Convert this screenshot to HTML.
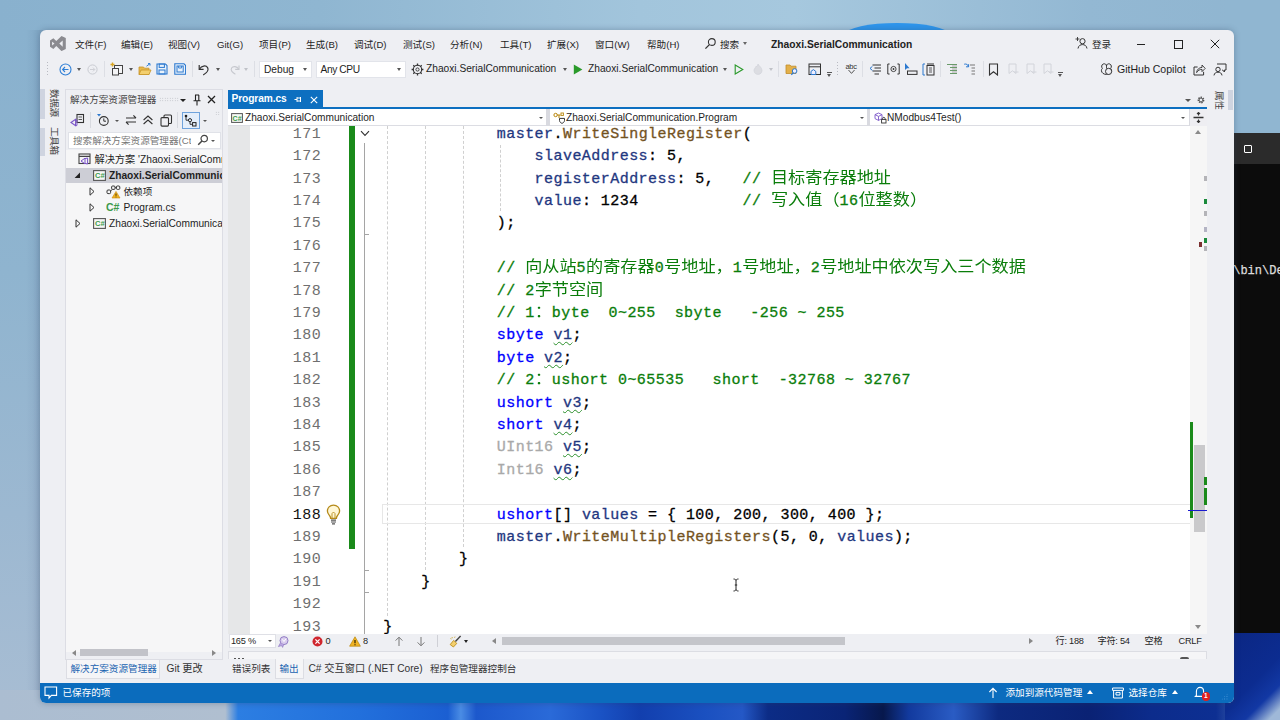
<!DOCTYPE html>
<html lang="zh-CN">
<head>
<meta charset="utf-8">
<title>Zhaoxi.SerialCommunication - Program.cs</title>
<style>
*{box-sizing:border-box;margin:0;padding:0}
html,body{width:1280px;height:720px;overflow:hidden}
body{position:relative;font-family:"Liberation Sans","Noto Sans CJK SC",sans-serif;font-size:10px;color:#1e1e1e;
 background:#8db3cf;}
.abs{position:absolute}
/* desktop */
#desk-top{left:0;top:0;width:1280px;height:40px;background:linear-gradient(90deg,#89b1ce 0%,#8fb6d1 25%,#a2c5dc 50%,#a6c8de 62%,#93b8d3 85%,#8fb5d0 100%)}
#desk-left{left:0;top:30px;width:60px;height:690px;background:linear-gradient(90deg,rgba(30,50,90,0) 26px,rgba(30,50,90,.09) 40px),linear-gradient(180deg,#89b1ce 0%,#8fb4cf 35%,#9cb8d1 70%,#a8bdd3 100%)}
#desk-right{left:1225px;top:0;width:55px;height:140px;background:#90b6d1}
#desk-bottom{left:0;top:690px;width:1280px;height:30px;background:linear-gradient(90deg,#abbdd1 0%,#b0bfd0 17.6%,#2c7ee2 18.6%,#2270dc 28%,#1b5fd2 35%,#4a8ce4 36%,#1c58cc 37.2%,#2a6ad8 43%,#1a52c4 47%,#123fae 50%,#1a50c0 55%,#2458c6 58%,#0c2c86 60%,#0a2476 66%,#07184c 69%,#123a9e 71%,#2a5cc4 74.5%,#0d2a80 78%,#0a2274 85%,#0c2c8c 90%,#0d2f92 95%,#4a6cb4 97.5%,#9fb4d4 100%)}
#term{left:1225px;top:133px;width:55px;height:500px;background:#0c0c0c}
#term-title{left:0;top:0;width:55px;height:31px;background:#2b2b2b}
#term-max{left:19px;top:12px;width:8px;height:8px;border:1px solid #fff;border-radius:1px}
#term-text{left:8.2px;top:131px;font-family:"Liberation Mono",monospace;font-size:12px;color:#dcdcdc;white-space:pre;-webkit-text-stroke:0.25px #dcdcdc}
#desk-rb{left:1225px;top:633px;width:55px;height:87px;background:linear-gradient(135deg,#0b2682 0%,#0c2c90 55%,#1238a4 75%,#9fb8d8 92%)}
/* window */
#win{left:40px;top:30px;width:1194px;height:672.5px;background:#eeeff3;border-radius:6px;overflow:hidden;box-shadow:0 0 6px rgba(40,60,90,.35)}
#status{left:0;top:652.5px;width:100%;height:20px;background:#0b6cbd;color:#fff}
#title{left:0;top:0;width:100%;height:27px}
.mi{top:8px;font-size:9.6px;line-height:14px;white-space:nowrap;color:#1e1e1e}
#wtitle{top:8px;font-size:10.25px;line-height:14px;font-weight:bold;color:#222;white-space:nowrap}
#toolbar{left:0;top:0;width:100%;height:60px}
.tt{font-size:10.2px;line-height:14px;white-space:nowrap;color:#1e1e1e}
.combo{top:32px;height:15px;background:#fff;border:1px solid #e2e4ea;box-sizing:content-box;margin:-1px 0 0 -1px}
.combo .tt{top:0.5px !important}
.grip{width:3px;height:16px;background-image:radial-gradient(circle,#b9bbc2 0.6px,transparent 0.8px);background-size:3px 3px}
.lbar{width:4.5px;background:#cfd4e0}
.vtab{writing-mode:vertical-rl;text-orientation:sideways;font-size:9.6px;line-height:14px;width:14px;color:#444;white-space:nowrap;letter-spacing:-0.3px}
#solexp{left:26px;top:60px;width:156px;height:569px;border:0;background:#eeeff3;overflow:hidden;outline:1px solid #dcdde4}
.se-title{font-size:9.6px;line-height:14px;color:#444;white-space:nowrap}
.hgrip{height:5px;background-image:radial-gradient(circle,#b5b7be 0.6px,transparent 0.8px);background-size:2.5px 2.5px}
#se-search{background:#fff;border:1px solid #e0e2e8}
#se-tree{background:#f6f6f7;overflow:hidden}
.tr{margin-top:1px;font-size:10.2px;line-height:14px;white-space:nowrap;color:#1e1e1e}
#editor{left:188px;top:60px;width:979px;height:558px}
#tab{left:0;top:0;width:95px;height:18px;background:#0d6fc0}
#tabname{left:3.5px;top:2px;font-size:10.2px;font-weight:bold;color:#fff;line-height:14px;letter-spacing:-0.1px}
#tabline{left:0;top:17px;width:979px;height:2px;background:#0d6fc0}
#nav{left:0;top:19px;width:979px;height:16.5px;background:#fff;border-bottom:1px solid #dcdde3}
.nv{top:1.5px;font-size:10.15px;line-height:14px;white-space:nowrap;color:#1e1e1e}
#code{background:#fff;overflow:hidden;font-family:"Liberation Mono","Noto Sans CJK SC",monospace;font-size:15px;letter-spacing:0.452px}
.ln{margin-top:1.5px;left:30.7px;width:62.5px;text-align:right;line-height:22.4px;height:22.4px;color:#6f6f6f;white-space:pre}
.ln.cur{color:#111}
.cl{margin-top:1.5px;margin-left:0.8px;-webkit-text-stroke:0.3px currentColor;line-height:22.4px;height:22.4px;white-space:pre;color:#000}
.cl .k{color:#0000ff}.cl .c{color:#0a7d0a}.cl .v{color:#1f377f}.cl .m{color:#74531f}.cl .f{color:#a9a9a9}
.cl .s{color:#1f377f;text-decoration:underline wavy #2a8f2a 1.3px;text-underline-offset:2.2px}
.cl .j{letter-spacing:0;-webkit-text-stroke:0;color:#0a7d0a;font-family:"Noto Sans CJK SC",sans-serif;font-size:17.15px;line-height:12px;display:inline-block;transform:scaleY(.92);vertical-align:baseline;position:relative;top:1px}
.ig{width:0;border-left:1px dashed #d0d0d0}
#vsb{background:#f6f6f6}
#ebar{background:#eeeff3}
.bt{top:0.5px;font-size:9.2px;letter-spacing:-0.25px;line-height:14px;white-space:nowrap;color:#1e1e1e}
.st{top:3px;font-size:9.6px;line-height:14px;color:#fff;white-space:nowrap}
</style>
</head>
<body>
<div id="desk-top" class="abs"></div>
<div id="desk-left" class="abs"></div>
<div class="abs" style="left:846px;top:22.5px;width:102px;height:22px;border-radius:50%;background:#2f96ec;filter:blur(0.6px)"></div>
<div id="desk-right" class="abs"></div>
<div id="desk-bottom" class="abs"></div>
<div id="desk-rb" class="abs"></div>
<div id="term" class="abs"><div id="term-title" class="abs"><div id="term-max" class="abs"></div></div><div id="term-text" class="abs">\bin\De</div></div>

<div id="win" class="abs">
<div id="title" class="abs">
<svg class="abs" style="left:9.5px;top:5.5px" width="16" height="15.2" viewBox="0 0 16 15"><path d="M11.5 0 L15.8 2 V13 L11.5 15 L6.3 10 L3.4 12.8 L0 10.6 V4.4 L3.4 2.2 L6.3 5 Z M12.7 4.4 L9.3 7.5 L12.7 10.6 Z M2.1 5.6 V9.4 L4.5 7.5 Z" fill="#8b8b90" fill-rule="evenodd"/></svg>
<span class="abs mi" style="left:35px">文件(F)</span>
<span class="abs mi" style="left:81px">编辑(E)</span>
<span class="abs mi" style="left:128px">视图(V)</span>
<span class="abs mi" style="left:177px">Git(G)</span>
<span class="abs mi" style="left:219px">项目(P)</span>
<span class="abs mi" style="left:266px">生成(B)</span>
<span class="abs mi" style="left:314px">调试(D)</span>
<span class="abs mi" style="left:363px">测试(S)</span>
<span class="abs mi" style="left:410px">分析(N)</span>
<span class="abs mi" style="left:460px">工具(T)</span>
<span class="abs mi" style="left:507px">扩展(X)</span>
<span class="abs mi" style="left:555px">窗口(W)</span>
<span class="abs mi" style="left:607px">帮助(H)</span>
<svg class="abs" style="left:664px;top:7px" width="13" height="13" viewBox="0 0 13 13"><circle cx="7.8" cy="5" r="3.4" fill="none" stroke="#333" stroke-width="1.1"/><path d="M5.4 7.6 L1.4 11.6" stroke="#333" stroke-width="1.3"/></svg>
<span class="abs mi" style="left:680px">搜索</span><span class="abs" style="left:703px;top:12px;width:0;height:0;border:2.5px solid transparent;border-top:3px solid #666"></span>
<span class="abs" id="wtitle" style="left:731px">Zhaoxi.SerialCommunication</span>
<svg class="abs" style="left:1035px;top:6px" width="14" height="14" viewBox="0 0 14 14"><circle cx="7.5" cy="5.2" r="2.6" fill="none" stroke="#333" stroke-width="1"/><path d="M3 12.5 C3.5 9.5 5.5 8.6 7.5 8.6 S11.5 9.5 12 12.5" fill="none" stroke="#333" stroke-width="1"/><path d="M2.5 1 V5 M0.5 3 H4.5" stroke="#333" stroke-width="0.9"/></svg>
<span class="abs mi" style="left:1052px">登录</span>
<span class="abs" style="left:1097px;top:14px;width:8px;height:1px;background:#222"></span>
<span class="abs" style="left:1134px;top:10px;width:8.5px;height:8.5px;border:1px solid #222"></span>
<svg class="abs" style="left:1170px;top:9px" width="10" height="10" viewBox="0 0 10 10"><path d="M0.8 0.8 L9.2 9.2 M9.2 0.8 L0.8 9.2" stroke="#222" stroke-width="1"/></svg>
</div>

<div id="toolbar" class="abs">
<span class="abs grip" style="left:6px;top:31px"></span>
<svg class="abs" style="left:19px;top:32.5px" width="13" height="13" viewBox="0 0 13 13"><circle cx="6.5" cy="6.5" r="5.5" fill="none" stroke="#2f7fd6" stroke-width="1.1"/><path d="M9.5 6.5 H3.8 M6 4 L3.6 6.5 L6 9" fill="none" stroke="#2f7fd6" stroke-width="1.1"/></svg>
<span class="abs" style="left:36.5px;top:38px;width:0;height:0;border:2.5px solid transparent;border-top:3px solid #555"></span>
<svg class="abs" style="left:46.5px;top:33.5px" width="11" height="11" viewBox="0 0 11 11"><circle cx="5.5" cy="5.5" r="4.6" fill="none" stroke="#c9cbd1" stroke-width="1"/><path d="M3 5.5 H7.6 M6 3.6 L7.8 5.5 L6 7.4" fill="none" stroke="#c9cbd1" stroke-width="0.9"/></svg>
<span class="abs" style="left:64px;top:31px;width:1px;height:16px;background:#dcdee4"></span>
<svg class="abs" style="left:70px;top:32px" width="14" height="14" viewBox="0 0 14 14"><rect x="4.5" y="3.5" width="8" height="8" fill="#f4f4f6" stroke="#444" stroke-width="1"/><rect x="2.5" y="6.5" width="6" height="6.5" fill="#f4f4f6" stroke="#444" stroke-width="1"/><path d="M2.5 0.5 V4.5 M0.5 2.5 H4.5" stroke="#d9a520" stroke-width="1.4"/></svg>
<span class="abs" style="left:88.5px;top:38px;width:0;height:0;border:2.5px solid transparent;border-top:3px solid #555"></span>
<svg class="abs" style="left:98px;top:32.5px" width="14" height="13" viewBox="0 0 14 13"><path d="M1 4 H5.5 L6.5 5.2 H11 V11.5 H1 Z" fill="#e8b84a" stroke="#c8952a" stroke-width="0.8"/><path d="M1 11.5 L3 7 H13 L11 11.5 Z" fill="#f3cf6e" stroke="#c8952a" stroke-width="0.8"/><path d="M8.5 3.2 L11.8 0.8 M10 0.6 H12 V2.6" fill="none" stroke="#2f7fd6" stroke-width="1"/></svg>
<svg class="abs" style="left:116px;top:33px" width="12" height="12" viewBox="0 0 12 12"><path d="M1 1 H9.5 L11 2.5 V11 H1 Z" fill="#eaf2fb" stroke="#2b78cf" stroke-width="1.1"/><rect x="3.2" y="1" width="5.2" height="3.4" fill="none" stroke="#2b78cf" stroke-width="1"/><rect x="3" y="7" width="6" height="4" fill="none" stroke="#2b78cf" stroke-width="1"/></svg>
<svg class="abs" style="left:133.5px;top:33px" width="12.5" height="12" viewBox="0 0 12.5 12"><path d="M0.8 0.8 H10 L11.6 2.4 V11.2 H0.8 Z" fill="#eaf2fb" stroke="#2b78cf" stroke-width="1.1"/><rect x="3" y="3" width="6.2" height="6" fill="none" stroke="#2b78cf" stroke-width="1"/><path d="M4.6 3 V5 H7.6 V3" fill="none" stroke="#2b78cf" stroke-width="0.9"/></svg>
<span class="abs" style="left:152px;top:31px;width:1px;height:16px;background:#dcdee4"></span>
<svg class="abs" style="left:157px;top:32.5px" width="14" height="13" viewBox="0 0 14 13"><path d="M2.2 2 V6.4 H6.6" fill="none" stroke="#333" stroke-width="1.2"/><path d="M2.6 6 C4.5 2.6 9 2 10.6 4.6 C12.2 7.4 9.6 10 6.2 12" fill="none" stroke="#333" stroke-width="1.2"/></svg>
<span class="abs" style="left:175.5px;top:38px;width:0;height:0;border:2.5px solid transparent;border-top:3px solid #555"></span>
<svg class="abs" style="left:189px;top:33.5px" width="12" height="11" viewBox="0 0 12 11"><path d="M10 1.6 V5.4 H6.2" fill="none" stroke="#c6c8ce" stroke-width="1.1"/><path d="M9.6 5 C8 2.2 4 1.8 2.6 4 C1.2 6.4 3.4 8.6 6.4 10.2" fill="none" stroke="#c6c8ce" stroke-width="1.1"/></svg>
<span class="abs" style="left:203.5px;top:38px;width:0;height:0;border:2.5px solid transparent;border-top:3px solid #c0c2c8"></span>
<span class="abs" style="left:214px;top:31px;width:1px;height:16px;background:#dcdee4"></span>
<span class="abs combo" style="left:220px;width:51px"><span class="abs tt" style="left:4px;top:2px">Debug</span></span>
<span class="abs" style="left:262.5px;top:38px;width:0;height:0;border:2.5px solid transparent;border-top:3px solid #555"></span>
<span class="abs combo" style="left:276.5px;width:88px"><span class="abs tt" style="left:4px;top:2px;letter-spacing:-0.4px">Any CPU</span></span>
<span class="abs" style="left:356.5px;top:38px;width:0;height:0;border:2.5px solid transparent;border-top:3px solid #555"></span>
<svg class="abs" style="left:370.5px;top:32.5px" width="13" height="13" viewBox="0 0 13 13"><circle cx="6.5" cy="6.5" r="4.2" fill="none" stroke="#333" stroke-width="1.1"/><circle cx="6.5" cy="6.5" r="1.6" fill="none" stroke="#333" stroke-width="0.9"/><path d="M6.5 0.6 V2.6 M6.5 10.4 V12.4 M0.6 6.5 H2.6 M10.4 6.5 H12.4 M2.3 2.3 L3.7 3.7 M9.3 9.3 L10.7 10.7 M2.3 10.7 L3.7 9.3 M9.3 3.7 L10.7 2.3" stroke="#333" stroke-width="1.3"/></svg>
<span class="abs tt" style="left:386px;top:32px">Zhaoxi.SerialCommunication</span>
<span class="abs" style="left:522.5px;top:38px;width:0;height:0;border:2.5px solid transparent;border-top:3px solid #555"></span>
<svg class="abs" style="left:532.5px;top:33.5px" width="10" height="11" viewBox="0 0 10 11"><path d="M0.8 0.6 L9.4 5.5 L0.8 10.4 Z" fill="#2a9a2a"/></svg>
<span class="abs tt" style="left:548px;top:32px">Zhaoxi.SerialCommunication</span>
<span class="abs" style="left:682.5px;top:38px;width:0;height:0;border:2.5px solid transparent;border-top:3px solid #555"></span>
<svg class="abs" style="left:694px;top:33.5px" width="10" height="11" viewBox="0 0 10 11"><path d="M1.2 1 L8.8 5.5 L1.2 10 Z" fill="none" stroke="#2a9a2a" stroke-width="1.1"/></svg>
<svg class="abs" style="left:712px;top:33px" width="12" height="12" viewBox="0 0 12 12"><path d="M6 1 C7 3 10 4.5 10 7.5 C10 10 8 11.4 6 11.4 C4 11.4 2 10 2 7.6 C2 5.6 3.6 4.8 4 3.2 C5 4 5.6 3 6 1 Z" fill="#dcdde2" stroke="#cfd0d6" stroke-width="0.6"/></svg>
<span class="abs" style="left:728.5px;top:38px;width:0;height:0;border:2.5px solid transparent;border-top:3px solid #c0c2c8"></span>
<span class="abs" style="left:738px;top:31px;width:1px;height:16px;background:#dcdee4"></span>
<svg class="abs" style="left:745px;top:32.5px" width="14" height="13" viewBox="0 0 14 13"><path d="M1 2 H5 L6 3.2 H11 V10.5 H1 Z" fill="#e3b04a" stroke="#c08d2a" stroke-width="0.8"/><circle cx="9.6" cy="8" r="2.3" fill="#eef" stroke="#2b78cf" stroke-width="1"/><path d="M8 9.8 L6.4 11.8" stroke="#2b78cf" stroke-width="1.2"/></svg>
<svg class="abs" style="left:768px;top:32.5px" width="14" height="13" viewBox="0 0 14 13"><rect x="1" y="1" width="11.5" height="10.5" fill="none" stroke="#333" stroke-width="1"/><path d="M1 3.8 H12.5" stroke="#333" stroke-width="1"/><path d="M3 11.5 V8.4 L5.4 6.6 L7.8 8.4 V11.5 Z" fill="#eef" stroke="#2b78cf" stroke-width="1"/></svg>
<span class="abs" style="left:786.5px;top:42px;width:5px;height:1px;background:#555"></span><span class="abs" style="left:786.5px;top:44px;width:0;height:0;border:2.5px solid transparent;border-top:3px solid #555"></span>
<span class="abs grip" style="left:796px;top:31px"></span>
<span class="abs" style="left:805.5px;top:31.5px;font-size:7.5px;line-height:9px;color:#333;letter-spacing:-0.3px">abc</span>
<svg class="abs" style="left:807px;top:39px" width="9" height="6" viewBox="0 0 9 6"><path d="M1.5 1 L4.5 4.4 L7.5 1" fill="none" stroke="#555" stroke-width="1"/></svg>
<span class="abs" style="left:822px;top:31px;width:1px;height:16px;background:#dcdee4"></span>
<svg class="abs" style="left:829px;top:33px" width="13" height="12" viewBox="0 0 13 12"><path d="M3.5 2 H12 M5.5 5 H12 M3.5 8 H12 M5.5 11 H10" stroke="#333" stroke-width="1"/><path d="M3.4 3.4 L1 5.4 L3.4 7.4" fill="none" stroke="#2b78cf" stroke-width="1"/></svg>
<svg class="abs" style="left:846.5px;top:33px" width="13" height="12" viewBox="0 0 13 12"><path d="M2.6 1 H0.8 V11 H2.6 M10.4 1 H12.2 V11 H10.4" fill="none" stroke="#333" stroke-width="1"/><circle cx="6.5" cy="6" r="2.6" fill="none" stroke="#333" stroke-width="0.9"/><circle cx="6.5" cy="6" r="0.9" fill="#333"/></svg>
<svg class="abs" style="left:864px;top:32px" width="14" height="13" viewBox="0 0 14 13"><path d="M1 1 L1 8 L3 6.2 L5.6 6.2 Z" fill="#2b78cf"/><rect x="3.5" y="9" width="9.5" height="3.4" fill="none" stroke="#333" stroke-width="1"/></svg>
<svg class="abs" style="left:882px;top:32.5px" width="13" height="13" viewBox="0 0 13 13"><path d="M3 1 H1 V12 H3" fill="none" stroke="#2b78cf" stroke-width="1"/><rect x="5" y="2.5" width="7" height="9.5" fill="none" stroke="#333" stroke-width="1"/><path d="M5 1 H12" stroke="#333" stroke-width="1"/><path d="M7 5 H10 M7 7 H10 M7 9 H10" stroke="#333" stroke-width="0.8"/></svg>
<span class="abs" style="left:900px;top:31px;width:1px;height:16px;background:#dcdee4"></span>
<svg class="abs" style="left:906px;top:33px" width="13" height="12" viewBox="0 0 13 12"><path d="M1 1.5 H11 M4 4.5 H11 M4 7.5 H11 M4 10.5 H11" stroke="#6a9a6a" stroke-width="1.2"/><path d="M6 3 H11 M6 6 H11 M6 9 H11" stroke="#999" stroke-width="0.8"/></svg>
<svg class="abs" style="left:922.5px;top:32.5px" width="14" height="13" viewBox="0 0 14 13"><path d="M1.2 1.2 C3.4 0.6 5 1.6 5.4 3.6 M5.6 1.2 V3.8 H3" fill="none" stroke="#2b78cf" stroke-width="1"/><path d="M7 2 H12 M8.5 5 H12 M8.5 8 H12 M8.5 11 H12" stroke="#777" stroke-width="1.2"/></svg>
<span class="abs" style="left:943px;top:31px;width:1px;height:16px;background:#dcdee4"></span>
<svg class="abs" style="left:948px;top:32.5px" width="11" height="13" viewBox="0 0 11 13"><path d="M1.5 1 H9.5 V12 L5.5 8.8 L1.5 12 Z" fill="none" stroke="#333" stroke-width="1.1"/></svg>
<svg class="abs" style="left:966.5px;top:33px" width="12" height="12" viewBox="0 0 12 12"><path d="M2 1 H9 V10.5 L5.5 7.8 L2 10.5 Z" fill="none" stroke="#d2d4da" stroke-width="1"/><path d="M7 9 H11.5" stroke="#d2d4da" stroke-width="1"/></svg>
<svg class="abs" style="left:984.5px;top:33px" width="12" height="12" viewBox="0 0 12 12"><path d="M2 1 H9 V10.5 L5.5 7.8 L2 10.5 Z" fill="none" stroke="#d2d4da" stroke-width="1"/><path d="M7 9 H11.5" stroke="#d2d4da" stroke-width="1"/></svg>
<svg class="abs" style="left:1001.5px;top:33px" width="12" height="12" viewBox="0 0 12 12"><path d="M2 1 H9 V10.5 L5.5 7.8 L2 10.5 Z" fill="none" stroke="#d2d4da" stroke-width="1"/><path d="M7 9 H11.5" stroke="#d2d4da" stroke-width="1"/></svg>
<span class="abs" style="left:1017.5px;top:42px;width:5px;height:1px;background:#555"></span><span class="abs" style="left:1017.5px;top:44px;width:0;height:0;border:2.5px solid transparent;border-top:3px solid #555"></span>
<svg class="abs" style="left:1059.5px;top:32.5px" width="13" height="13" viewBox="0 0 13 13"><path d="M3.2 1 C5 0.4 6.4 1.2 6.5 3 C6.6 1.2 8 0.4 9.8 1 C11.6 1.8 11.8 4 10.6 5.4 C12 6.4 12 9 10 10.4 C8 11.8 5 11.8 3 10.4 C1 9 1 6.4 2.4 5.4 C1.2 4 1.4 1.8 3.2 1 Z" fill="none" stroke="#333" stroke-width="1"/><circle cx="8.6" cy="8.4" r="3.1" fill="#eeeef2" stroke="#333" stroke-width="1"/><path d="M6.5 3 V5.6" stroke="#333" stroke-width="0.9"/></svg>
<span class="abs tt" style="left:1077px;top:32px;font-size:10.55px">GitHub Copilot</span>
<svg class="abs" style="left:1152.5px;top:32.5px" width="13" height="13" viewBox="0 0 13 13"><path d="M4.6 4 H1 V12 H10.6 V8.8" fill="none" stroke="#333" stroke-width="1"/><path d="M3.6 9.6 C4 6.4 6 4.6 9 4.4 V2 L12.2 5.4 L9 8.6 V6.4 C6.6 6.4 5 7.4 3.6 9.6 Z" fill="none" stroke="#333" stroke-width="0.9"/></svg>
<svg class="abs" style="left:1173px;top:32.5px" width="14" height="13" viewBox="0 0 14 13"><path d="M4 1 H13 V7 H11.4 V9 L9.6 7 H9" fill="none" stroke="#333" stroke-width="1"/><circle cx="5" cy="6.4" r="2.2" fill="#eeeef2" stroke="#333" stroke-width="1"/><path d="M1 12.4 C1.4 10 3 9.2 5 9.2 S8.6 10 9 12.4" fill="none" stroke="#333" stroke-width="1"/></svg>
</div>

<div id="lefttabs">
<span class="abs lbar" style="left:0;top:58.5px;height:30px"></span><span class="abs lbar" style="left:0;top:98px;height:27.5px"></span>
<span class="abs vtab" style="left:7px;top:59px">数据源</span>
<span class="abs vtab" style="left:7px;top:97px">工具箱</span>
</div>

<div id="solexp" class="abs">
<span class="abs se-title" style="left:4px;top:2.5px">解决方案资源管理器</span>
<span class="abs hgrip" style="left:92.5px;top:7px;width:20px"></span>
<span class="abs" style="left:113.8px;top:8.5px;width:0;height:0;border:3.2px solid transparent;border-top:3.7px solid #222"></span>
<svg class="abs" style="left:126px;top:3.5px" width="10" height="13" viewBox="0 0 10 13"><path d="M3 1 H7 M3.5 1 V6.5 M6.8 1 V6.5 M1.5 6.8 H8.5 M5 7 V11.5" fill="none" stroke="#222" stroke-width="1.1"/></svg>
<svg class="abs" style="left:140.5px;top:5px" width="9" height="9" viewBox="0 0 9 9"><path d="M1 1 L8 8 M8 1 L1 8" stroke="#222" stroke-width="1.3"/></svg>
<svg class="abs" style="left:4px;top:23px" width="15" height="14" viewBox="0 0 15 14"><rect x="7" y="1.5" width="6.5" height="8" fill="none" stroke="#333" stroke-width="1.1"/><path d="M8.5 4 H12 M8.5 6.5 H12" stroke="#333" stroke-width="0.8"/><path d="M1 9.5 L5.6 6.4 V12.8 Z" fill="none" stroke="#7a55c8" stroke-width="1.1"/><path d="M5.6 7 L7 7 V12.4 L5.6 12.4" fill="none" stroke="#7a55c8" stroke-width="0.9"/></svg>
<span class="abs" style="left:24px;top:22px;width:1px;height:16px;background:#d8dae0"></span>
<svg class="abs" style="left:30px;top:22.5px" width="14" height="14" viewBox="0 0 14 14"><path d="M1 1 H5 L3 3.6 Z" fill="#2b78cf"/><circle cx="7.8" cy="8" r="4.4" fill="none" stroke="#333" stroke-width="1.1"/><path d="M7.8 5.4 V8.2 H10" fill="none" stroke="#333" stroke-width="1"/></svg>
<span class="abs" style="left:48.7px;top:29.5px;width:0;height:0;border:2.3px solid transparent;border-top:2.8px solid #555"></span>
<svg class="abs" style="left:59px;top:24px" width="12" height="12" viewBox="0 0 12 12"><path d="M1 4 H11 M8.4 1.4 L11 4 M11 8 H1 M3.6 10.6 L1 8" fill="none" stroke="#333" stroke-width="1.1"/></svg>
<svg class="abs" style="left:76px;top:24px" width="12" height="12" viewBox="0 0 12 12"><path d="M1.6 6 L6 2 L10.4 6 M1.6 10 L6 6 L10.4 10" fill="none" stroke="#333" stroke-width="1.1"/></svg>
<svg class="abs" style="left:93.5px;top:23.5px" width="13" height="13" viewBox="0 0 13 13"><rect x="4" y="1" width="7.5" height="8.5" rx="1" fill="none" stroke="#333" stroke-width="1.1"/><rect x="1" y="3.6" width="7.5" height="8.5" rx="1" fill="#eeeef2" stroke="#333" stroke-width="1.1"/></svg>
<span class="abs" style="left:111px;top:22px;width:1px;height:16px;background:#d8dae0"></span>
<span class="abs" style="left:115.5px;top:21.5px;width:18px;height:17.5px;border:1px solid #6fa3dc;background:#e4eefa"></span>
<svg class="abs" style="left:118px;top:24px" width="13" height="13" viewBox="0 0 13 13"><circle cx="2" cy="2" r="1.3" fill="#222"/><circle cx="6" cy="6.2" r="1.6" fill="none" stroke="#222" stroke-width="1"/><rect x="8.6" y="8.6" width="3.4" height="3.4" fill="none" stroke="#222" stroke-width="1"/><path d="M2 3 V6.2 H4.4 M6 7.8 V10.3 H8.6" fill="none" stroke="#222" stroke-width="0.9"/></svg>
<span class="abs" style="left:136.7px;top:29.5px;width:0;height:0;border:2.3px solid transparent;border-top:2.8px solid #555"></span>
<span class="abs" style="left:148.5px;top:21px;width:5px;height:4px;background-image:radial-gradient(circle,#b5b7be 0.6px,transparent 0.8px);background-size:2.5px 2.5px"></span>
<div class="abs" id="se-search" style="left:2px;top:42px;width:152.5px;height:17px"><span class="abs" style="left:4px;top:1px;width:117.5px;overflow:hidden;white-space:nowrap;color:#767676;font-size:9.6px;line-height:14px">搜索解决方案资源管理器(Ctrl+;)</span></div>
<svg class="abs" style="left:131px;top:44px" width="12" height="12" viewBox="0 0 12 12"><circle cx="7.2" cy="4.6" r="3.2" fill="none" stroke="#444" stroke-width="1.2"/><path d="M5 7 L1.2 10.8" stroke="#444" stroke-width="1.5"/></svg>
<span class="abs" style="left:145.2px;top:49.5px;width:0;height:0;border:2.3px solid transparent;border-top:2.8px solid #555"></span>
<div class="abs" id="se-tree" style="left:0;top:60px;width:156px;height:502px">
<span class="abs" style="left:0;top:17.5px;width:156px;height:15px;background:#cdced6"></span>
<svg class="abs" style="left:12px;top:3px" width="13" height="12" viewBox="0 0 13 12"><rect x="1" y="1" width="11" height="9.5" fill="none" stroke="#444" stroke-width="1.1"/><path d="M1 3.4 H12" stroke="#444" stroke-width="1.1"/><path d="M3 8 L7 5.2 V10.8 Z M7 5.6 L9.6 5 V11 L7 10.4" fill="#f5f5f7" stroke="#7a55c8" stroke-width="1"/></svg>
<span class="abs tr" style="left:28.5px;top:2px">解决方案 'Zhaoxi.SerialCommunication' (2 个项目)</span>
<svg class="abs" style="left:8px;top:21.5px" width="7" height="7" viewBox="0 0 7 7"><path d="M6 0.6 V6 H0.6 Z" fill="#222"/></svg>
<svg class="abs" style="left:26.5px;top:19.5px" width="13" height="11" viewBox="0 0 13 11"><rect x="0.6" y="0.6" width="11.8" height="9.8" fill="#f7f7f7" stroke="#555" stroke-width="1.1"/><text x="2" y="8.2" font-family="Liberation Sans, sans-serif" font-size="7.5" font-weight="bold" fill="#3c9a4a">C#</text></svg>
<span class="abs tr" style="left:43px;top:18px;font-weight:bold">Zhaoxi.SerialCommunication</span>
<svg class="abs" style="left:22.5px;top:36.5px" width="6" height="9" viewBox="0 0 6 9"><path d="M1 0.8 L5 4.5 L1 8.2 Z" fill="none" stroke="#333" stroke-width="1"/></svg>
<svg class="abs" style="left:39.5px;top:34.5px" width="15" height="14" viewBox="0 0 15 14"><rect x="1" y="5" width="3.6" height="3.6" rx="1" fill="none" stroke="#333" stroke-width="1"/><rect x="5.6" y="1" width="3.4" height="3.4" rx="1" fill="none" stroke="#333" stroke-width="1"/><rect x="10.4" y="1" width="3.4" height="3.4" rx="1" fill="none" stroke="#333" stroke-width="1"/><path d="M4.6 6 L6.4 4.4 M9 2.7 H10.4" stroke="#333" stroke-width="0.9"/><path d="M10 6.4 L14 13 H6 Z" fill="#f0b323" stroke="#c98a10" stroke-width="0.6"/><path d="M10 8.6 V10.8 M10 11.6 V12.3" stroke="#3a2a00" stroke-width="0.9"/></svg>
<span class="abs tr" style="left:57.5px;top:34px;font-size:9.6px">依赖项</span>
<svg class="abs" style="left:22.5px;top:52.5px" width="6" height="9" viewBox="0 0 6 9"><path d="M1 0.8 L5 4.5 L1 8.2 Z" fill="none" stroke="#333" stroke-width="1"/></svg>
<svg class="abs" style="left:40px;top:51px" width="14" height="12" viewBox="0 0 14 12"><text x="0" y="10" font-family="Liberation Sans, sans-serif" font-size="10.5" font-weight="bold" fill="#3c9a4a">C#</text></svg>
<span class="abs tr" style="left:57.5px;top:50px">Program.cs</span>
<svg class="abs" style="left:8.5px;top:68.5px" width="6" height="9" viewBox="0 0 6 9"><path d="M1 0.8 L5 4.5 L1 8.2 Z" fill="none" stroke="#333" stroke-width="1"/></svg>
<svg class="abs" style="left:26.5px;top:67.5px" width="13" height="11" viewBox="0 0 13 11"><rect x="0.6" y="0.6" width="11.8" height="9.8" fill="#f7f7f7" stroke="#555" stroke-width="1.1"/><text x="2" y="8.2" font-family="Liberation Sans, sans-serif" font-size="7.5" font-weight="bold" fill="#3c9a4a">C#</text></svg>
<span class="abs tr" style="left:43px;top:66px">Zhaoxi.SerialCommunication.Test</span>
</div>
<span class="abs" style="left:6px;top:559.5px;width:0;height:0;border:3px solid transparent;border-right:4px solid #888;border-left:0"></span>
<span class="abs" style="left:14px;top:558.5px;width:68px;height:7.5px;background:#c2c3c9"></span>
<span class="abs" style="left:146px;top:559.5px;width:0;height:0;border:3px solid transparent;border-left:4px solid #888;border-right:0"></span>
</div>
<span class="abs" style="left:26px;top:630px;width:94px;height:19px;background:#f5f5f7;border:1px solid #dcdde3;border-top:0"></span>
<span class="abs tt" style="left:30.5px;top:631.5px;color:#1a63b0;font-size:9.6px">解决方案资源管理器</span>
<span class="abs tt" style="left:126.5px;top:631.5px;color:#333">Git 更改</span>

<div id="editor" class="abs">
<div class="abs" id="tab"><span class="abs" id="tabname">Program.cs</span><svg class="abs" style="left:66px;top:5px" width="9" height="9" viewBox="0 0 9 9"><path d="M0.5 4.5 H3 M3 2.2 V6.8 M3 3 H6.5 V6 H3 M6.5 2 V7" fill="none" stroke="#fff" stroke-width="1"/></svg><svg class="abs" style="left:82px;top:5.5px" width="8" height="8" viewBox="0 0 8 8"><path d="M0.8 0.8 L7.2 7.2 M7.2 0.8 L0.8 7.2" stroke="#fff" stroke-width="1.1"/></svg></div>
<div class="abs" id="tabline"></div>
<span class="abs" style="left:957.2px;top:9px;width:0;height:0;border:3.3px solid transparent;border-top:3.6px solid #555"></span>
<svg class="abs" style="left:968px;top:4.5px" width="10" height="10" viewBox="0 0 10 10"><circle cx="5" cy="5" r="2.6" fill="none" stroke="#555" stroke-width="1.6" stroke-dasharray="1.4 0.9"/><circle cx="5" cy="5" r="1.9" fill="none" stroke="#555" stroke-width="0.9"/></svg>
<div class="abs" id="nav">
<svg class="abs" style="left:3px;top:3.5px" width="12" height="10" viewBox="0 0 12 10"><rect x="0.6" y="0.6" width="10.8" height="8.8" fill="#f4f8f4" stroke="#555" stroke-width="1"/><text x="1.6" y="7.6" font-family="Liberation Sans, sans-serif" font-size="7" font-weight="bold" fill="#3c9a4a">C#</text></svg><span class="abs nv" style="left:17px">Zhaoxi.SerialCommunication</span><span class="abs" style="left:310.7px;top:7.5px;width:0;height:0;border:2.3px solid transparent;border-top:2.8px solid #555"></span><span class="abs" style="left:318px;top:0;width:3.5px;height:16.5px;background:#d9dae0"></span><svg class="abs" style="left:324.5px;top:2.5px" width="13" height="12" viewBox="0 0 13 12"><circle cx="2.6" cy="3" r="1.7" fill="none" stroke="#b8860b" stroke-width="1"/><path d="M4.2 3 H7.5 M6 3 V6" fill="none" stroke="#b8860b" stroke-width="1"/><rect x="8" y="1" width="2.4" height="2.4" fill="none" stroke="#b8860b" stroke-width="0.9"/><path d="M6.5 6.4 H11.5 V8.5 C11.5 10 10 11 9 11.4 C8 11 6.5 10 6.5 8.5 Z" fill="#fff" stroke="#333" stroke-width="1"/></svg><span class="abs nv" style="left:338px">Zhaoxi.SerialCommunication.Program</span><span class="abs" style="left:631.7px;top:7.5px;width:0;height:0;border:2.3px solid transparent;border-top:2.8px solid #555"></span><span class="abs" style="left:638.5px;top:0;width:3.5px;height:16.5px;background:#d9dae0"></span><svg class="abs" style="left:645.5px;top:2.5px" width="13" height="12" viewBox="0 0 13 12"><path d="M4.5 1 L8 2.6 V6.6 L4.5 8.4 L1 6.6 V2.6 Z M1 2.6 L4.5 4.4 L8 2.6 M4.5 4.4 V8.4" fill="none" stroke="#7a55c8" stroke-width="0.9"/><rect x="7.6" y="7.4" width="4.4" height="3.6" fill="#fff" stroke="#333" stroke-width="0.9"/><path d="M8.6 7.4 V6.4 C8.6 5 11 5 11 6.4 V7.4" fill="none" stroke="#333" stroke-width="0.9"/></svg><span class="abs nv" style="left:659px">NModbus4Test()</span><span class="abs" style="left:952.7px;top:7.5px;width:0;height:0;border:2.3px solid transparent;border-top:2.8px solid #555"></span><span class="abs" style="left:961px;top:0;width:18px;height:16.5px;background:#eeeef2;border-left:1px solid #d9dae0"></span><svg class="abs" style="left:964.5px;top:3px" width="11" height="11" viewBox="0 0 11 11"><path d="M0.5 5.5 H10.5" stroke="#333" stroke-width="1.3"/><path d="M5.5 0.6 V3.6 M4 2 L5.5 0.5 L7 2 M5.5 10.4 V7.4 M4 9 L5.5 10.5 L7 9" fill="none" stroke="#333" stroke-width="1.1"/></svg></div>
<div class="abs" id="code" style="left:0;top:36px;width:979px;height:507.5px">
<span class="abs" style="left:0;top:0;width:22px;height:100%;background:#e6e7e8"></span>
<span class="abs" style="left:121px;top:0;width:6px;height:422.5px;background:#1a8a1a"></span>
<span class="abs" style="left:136px;top:17px;width:1px;height:490.5px;background:#a5a5a5"></span>
<span class="abs" style="left:136px;top:107.5px;width:5px;height:1px;background:#a5a5a5"></span>
<span class="abs" style="left:136px;top:444px;width:5px;height:1px;background:#a5a5a5"></span>
<span class="abs" style="left:136px;top:466px;width:5px;height:1px;background:#a5a5a5"></span>
<svg class="abs" style="left:131.5px;top:3.5px" width="10" height="7" viewBox="0 0 10 7"><path d="M1 1.2 L5 5.4 L9 1.2" fill="none" stroke="#333" stroke-width="1.1"/></svg>
<span class="abs ig" style="left:159.3px;top:0px;height:490px"></span>
<span class="abs ig" style="left:197px;top:0px;height:444px"></span>
<span class="abs ig" style="left:234.6px;top:0px;height:421px"></span>
<span class="abs ig" style="left:272.4px;top:19px;height:66px"></span>
<span class="abs" style="left:154px;top:378px;width:807.5px;height:19.5px;border:1.5px solid #e7e7e7;border-right:0"></span>
<svg class="abs" style="left:97.5px;top:378px" width="15" height="21" viewBox="0 0 15 21"><path d="M7.5 1.2 C3.8 1.2 1.4 3.8 1.4 7 C1.4 9.4 2.8 10.8 3.8 12 C4.4 12.8 4.6 13.6 4.6 14.4 H10.4 C10.4 13.6 10.6 12.8 11.2 12 C12.2 10.8 13.6 9.4 13.6 7 C13.6 3.8 11.2 1.2 7.5 1.2 Z" fill="#fff7d6" stroke="#b58a1a" stroke-width="1.3"/><path d="M5 16.2 H10 M5 18 H10 M6 19.8 H9" stroke="#555" stroke-width="1.2"/><path d="M6 14 V9.6 L7.5 8 L9 9.6 V14" fill="none" stroke="#b58a1a" stroke-width="0.9"/></svg>
<span class="abs ln" style="top:-3.8px">171</span><span class="abs cl" style="left:268.0px;top:-3.8px"><span class="v">master</span>.<span class="m">WriteSingleRegister</span>(</span>
<span class="abs ln" style="top:18.6px">172</span><span class="abs cl" style="left:305.81px;top:18.6px"><span class="v">slaveAddress</span>: 5,</span>
<span class="abs ln" style="top:41.0px">173</span><span class="abs cl" style="left:305.81px;top:41.0px"><span class="v">registerAddress</span>: 5,   <span class="c">// </span><span class="j">目标寄存器地址</span></span>
<span class="abs ln" style="top:63.4px">174</span><span class="abs cl" style="left:305.81px;top:63.4px"><span class="v">value</span>: 1234           <span class="c">// </span><span class="j">写入值（</span><span class="c">16</span><span class="j">位整数）</span></span>
<span class="abs ln" style="top:85.8px">175</span><span class="abs cl" style="left:268.0px;top:85.8px">);</span>
<span class="abs ln" style="top:108.2px">176</span>
<span class="abs ln" style="top:130.6px">177</span><span class="abs cl" style="left:268.0px;top:130.6px"><span class="c">// </span><span class="j">向从站</span><span class="c">5</span><span class="j">的寄存器</span><span class="c">0</span><span class="j">号地址，</span><span class="c">1</span><span class="j">号地址，</span><span class="c">2</span><span class="j">号地址中依次写入三个数据</span></span>
<span class="abs ln" style="top:153.0px">178</span><span class="abs cl" style="left:268.0px;top:153.0px"><span class="c">// 2</span><span class="j">字节空间</span></span>
<span class="abs ln" style="top:175.4px">179</span><span class="abs cl" style="left:268.0px;top:175.4px"><span class="c">// 1</span><span class="j">：</span><span class="c">byte  0~255  sbyte   -256 ~ 255</span></span>
<span class="abs ln" style="top:197.8px">180</span><span class="abs cl" style="left:268.0px;top:197.8px"><span class="k">sbyte</span> <span class="s">v1</span>;</span>
<span class="abs ln" style="top:220.2px">181</span><span class="abs cl" style="left:268.0px;top:220.2px"><span class="k">byte</span> <span class="s">v2</span>;</span>
<span class="abs ln" style="top:242.6px">182</span><span class="abs cl" style="left:268.0px;top:242.6px"><span class="c">// 2</span><span class="j">：</span><span class="c">ushort 0~65535   short  -32768 ~ 32767</span></span>
<span class="abs ln" style="top:265.0px">183</span><span class="abs cl" style="left:268.0px;top:265.0px"><span class="k">ushort</span> <span class="s">v3</span>;</span>
<span class="abs ln" style="top:287.4px">184</span><span class="abs cl" style="left:268.0px;top:287.4px"><span class="k">short</span> <span class="s">v4</span>;</span>
<span class="abs ln" style="top:309.8px">185</span><span class="abs cl" style="left:268.0px;top:309.8px"><span class="f">UInt16</span> <span class="s">v5</span>;</span>
<span class="abs ln" style="top:332.2px">186</span><span class="abs cl" style="left:268.0px;top:332.2px"><span class="f">Int16</span> <span class="s">v6</span>;</span>
<span class="abs ln" style="top:354.6px">187</span>
<span class="abs ln cur" style="top:377.0px">188</span><span class="abs cl" style="left:268.0px;top:377.0px"><span class="k">ushort</span>[] <span class="v">values</span> = { 100, 200, 300, 400 };</span>
<span class="abs ln" style="top:399.4px">189</span><span class="abs cl" style="left:268.0px;top:399.4px"><span class="v">master</span>.<span class="m">WriteMultipleRegisters</span>(5, 0, <span class="v">values</span>);</span>
<span class="abs ln" style="top:421.8px">190</span><span class="abs cl" style="left:230.19px;top:421.8px">}</span>
<span class="abs ln" style="top:444.2px">191</span><span class="abs cl" style="left:192.38px;top:444.2px">}</span>
<span class="abs ln" style="top:466.6px">192</span>
<span class="abs ln" style="top:489.0px">193</span><span class="abs cl" style="left:154.56px;top:489.0px">}</span>
<div class="abs" id="vsb" style="left:961.5px;top:0;width:17.5px;height:100%">
<span class="abs" style="left:5.0px;top:4px;width:0;height:0;border:3.5px solid transparent;border-bottom:4.5px solid #8a8a8a;border-top:0"></span>
<span class="abs" style="left:5.0px;top:498.5px;width:0;height:0;border:3.5px solid transparent;border-top:4.5px solid #8a8a8a;border-bottom:0"></span>
<span class="abs" style="left:4.5px;top:319px;width:10.5px;height:86.5px;background:#c9c9cb"></span>
<span class="abs" style="left:0.0px;top:295.5px;width:3px;height:96px;background:#1a8a1a"></span>
<span class="abs" style="left:14.0px;top:351px;width:3.5px;height:8px;background:#1a8a1a"></span>
<span class="abs" style="left:14.0px;top:362px;width:3.5px;height:17px;background:#1a8a1a"></span>
<span class="abs" style="left:-1.5px;top:383.5px;width:19px;height:1.5px;background:#1a1ad0"></span>
<span class="abs" style="left:14.0px;top:50px;width:3.5px;height:4.5px;background:#b4b4b8"></span>
<span class="abs" style="left:14.0px;top:73px;width:3.5px;height:4.5px;background:#1a8a3a"></span>
<span class="abs" style="left:14.0px;top:85px;width:3.5px;height:4.5px;background:#b4b4b8"></span>
<span class="abs" style="left:14.0px;top:101px;width:3.5px;height:4.5px;background:#b4b4c4"></span>
<span class="abs" style="left:14.0px;top:112px;width:3.5px;height:4.5px;background:#1a8a3a"></span>
<span class="abs" style="left:9.0px;top:116px;width:3.5px;height:4.5px;background:#7a3030"></span>
<span class="abs" style="left:14.0px;top:120px;width:3.5px;height:4.5px;background:#b4b4b8"></span>
</div>
</div>
<div class="abs" id="ebar" style="left:0;top:543.5px;width:979px;height:14.5px">
<span class="abs" style="left:0.5px;top:0.5px;width:47px;height:13.5px;background:#fff;border:1px solid #dfe0e6"></span>
<span class="abs bt" style="left:3px">165 %</span>
<span class="abs" style="left:40.3px;top:6.5px;width:0;height:0;border:2.2px solid transparent;border-top:2.7px solid #555"></span>
<svg class="abs" style="left:49px;top:1.0px" width="13" height="13" viewBox="0 0 13 13"><circle cx="7" cy="5.6" r="4" fill="#d9cdee" stroke="#8a74c0" stroke-width="0.9"/><path d="M3.4 8 L1.4 11.6 L4.6 10.6 L5.6 12.4 L6.8 9.4" fill="#b9a5e0" stroke="#8a74c0" stroke-width="0.6"/><path d="M5.4 4.4 L7 6.6 L9 3.6" fill="none" stroke="#fff" stroke-width="1"/></svg>
<svg class="abs" style="left:83.5px;top:2.0px" width="11" height="11" viewBox="0 0 11 11"><circle cx="5.5" cy="5.5" r="5" fill="#d0262e"/><path d="M3.4 3.4 L7.6 7.6 M7.6 3.4 L3.4 7.6" stroke="#fff" stroke-width="1.3"/></svg>
<span class="abs bt" style="left:97.5px">0</span>
<svg class="abs" style="left:120.5px;top:2.0px" width="12" height="11" viewBox="0 0 12 11"><path d="M6 0.8 L11.4 10.2 H0.6 Z" fill="#f0b323" stroke="#b8860b" stroke-width="0.7"/><path d="M6 4 V7.2 M6 8.2 V9.2" stroke="#2a1f00" stroke-width="1.2"/></svg>
<span class="abs bt" style="left:135px">8</span>
<svg class="abs" style="left:165.5px;top:2.0px" width="10" height="11" viewBox="0 0 10 11"><path d="M5 10 V1.4 M1.6 4.6 L5 1.2 L8.4 4.6" fill="none" stroke="#777" stroke-width="1"/></svg>
<svg class="abs" style="left:188px;top:2.0px" width="10" height="11" viewBox="0 0 10 11"><path d="M5 1 V9.6 M1.6 6.4 L5 9.8 L8.4 6.4" fill="none" stroke="#777" stroke-width="1"/></svg>
<span class="abs" style="left:209px;top:1px;width:1px;height:12px;background:#cfd0d6"></span>
<svg class="abs" style="left:220.5px;top:1.0px" width="13" height="13" viewBox="0 0 13 13"><path d="M11.6 1 L6.4 6.6" stroke="#444" stroke-width="1.4"/><path d="M4.6 5.4 L7.8 8.4 L4.4 12 L1.2 9.6 Z" fill="#f3cf6e" stroke="#b8860b" stroke-width="0.8"/><path d="M3 2 L3.4 3.2 M1.4 3.6 L2.6 4 M6 1.6 L5.6 2.8" stroke="#c9a227" stroke-width="0.8"/></svg>
<span class="abs" style="left:235.9px;top:6.5px;width:0;height:0;border:2.6px solid transparent;border-top:3.1px solid #222"></span>
<span class="abs" style="left:263.5px;top:4.0px;width:0;height:0;border:3.2px solid transparent;border-right:4px solid #888;border-left:0"></span>
<span class="abs" style="left:274px;top:3.0px;width:343px;height:8px;background:#c4c5ca"></span>
<span class="abs" style="left:800.5px;top:4.0px;width:0;height:0;border:3.2px solid transparent;border-left:4px solid #888;border-right:0"></span>
<span class="abs bt" style="left:827.5px">行: 188</span>
<span class="abs bt" style="left:869.5px">字符: 54</span>
<span class="abs bt" style="left:916.5px">空格</span>
<span class="abs bt" style="left:950.5px">CRLF</span>
</div>
</div>

<span class="abs" style="left:188px;top:621px;width:979px;height:8px;background:#f5f5f7;border:1px solid #dcdde3;border-bottom:0"></span>
<span class="abs" style="left:193px;top:626.5px;width:12px;height:2.5px;background-image:radial-gradient(circle,#555 0.7px,transparent 0.9px);background-size:4px 3px"></span>
<span class="abs" style="left:1140px;top:627px;width:9px;height:2px;background:#555;border-radius:2px 2px 0 0"></span>
<span class="abs tt" style="left:192px;top:631.5px;color:#333;font-size:9.6px">错误列表</span>
<span class="abs" style="left:235px;top:629px;width:28.5px;height:20px;background:#f5f5f7;border:1px solid #dcdde3;border-top:0"></span>
<span class="abs tt" style="left:239.5px;top:631.5px;color:#1a63b0;font-size:9.6px">输出</span>
<span class="abs tt" style="left:268.5px;top:631.5px;color:#333">C# 交互窗口 (.NET Core)</span>
<span class="abs tt" style="left:390px;top:631.5px;color:#333;font-size:9.6px">程序包管理器控制台</span>
<span class="abs vtab" style="left:1171.5px;top:61px">属性</span>
<span class="abs" style="left:1188px;top:60px;width:4.5px;height:20px;background:#cfd4e0"></span>

<div id="status" class="abs">
<svg class="abs" style="left:3.5px;top:3.0px" width="14" height="14" viewBox="0 0 14 14"><path d="M1 1 H12.6 V9.4 H7.4 L5 12 V9.4 H1 Z" fill="none" stroke="#fff" stroke-width="1.1"/></svg>
<span class="abs st" style="left:22.5px;font-size:9.6px">已保存的项</span>
<svg class="abs" style="left:948px;top:4.0px" width="10" height="12" viewBox="0 0 10 12"><path d="M5 11 V1.6 M1.4 5 L5 1.4 L8.6 5" fill="none" stroke="#fff" stroke-width="1.1"/></svg>
<span class="abs st" style="left:965.5px;font-size:9.6px">添加到源代码管理</span>
<span class="abs" style="left:1047px;top:7.5px;width:0;height:0;border:3px solid transparent;border-bottom:4px solid #fff;border-top:0"></span>
<svg class="abs" style="left:1071.5px;top:4.0px" width="12" height="12" viewBox="0 0 12 12"><path d="M0.6 1 H11.4 V3.4 H0.6 Z M1.6 3.4 V11 H10.4 V3.4 M4 5.4 H8 V8 H4 Z" fill="none" stroke="#fff" stroke-width="1"/></svg>
<span class="abs st" style="left:1088.5px;font-size:9.6px">选择仓库</span>
<span class="abs" style="left:1132px;top:7.5px;width:0;height:0;border:3px solid transparent;border-bottom:4px solid #fff;border-top:0"></span>
<svg class="abs" style="left:1154px;top:3.0px" width="12" height="13" viewBox="0 0 12 13"><path d="M2.4 9.4 V5.4 C2.4 3 4 1.4 6 1.4 C8 1.4 9.6 3 9.6 5.4 V9.4 L10.6 10.4 H1.4 Z" fill="none" stroke="#fff" stroke-width="1.1"/></svg>
<span class="abs" style="left:1161.5px;top:9.5px;width:8.5px;height:8.5px;border-radius:50%;background:#e02020;color:#fff;font-size:6.5px;line-height:8.5px;text-align:center;font-weight:bold">1</span>
<span class="abs" style="left:1181px;top:10.5px;width:7px;height:7px;background-image:radial-gradient(circle,#5aa0e0 0.6px,transparent 0.8px);background-size:2.4px 2.4px;clip-path:polygon(100% 0,100% 100%,0 100%)"></span>

</div>
</div>
<svg class="abs" style="left:732px;top:578px" width="8" height="14" viewBox="0 0 8 14"><path d="M1.5 1 C3 1 4 1.6 4 2.6 C4 1.6 5 1 6.5 1 M4 2.6 V11.4 M1.5 13 C3 13 4 12.4 4 11.4 C4 12.4 5 13 6.5 13 M2.8 7 H5.2" fill="none" stroke="#222" stroke-width="1"/></svg>
</body>
</html>
